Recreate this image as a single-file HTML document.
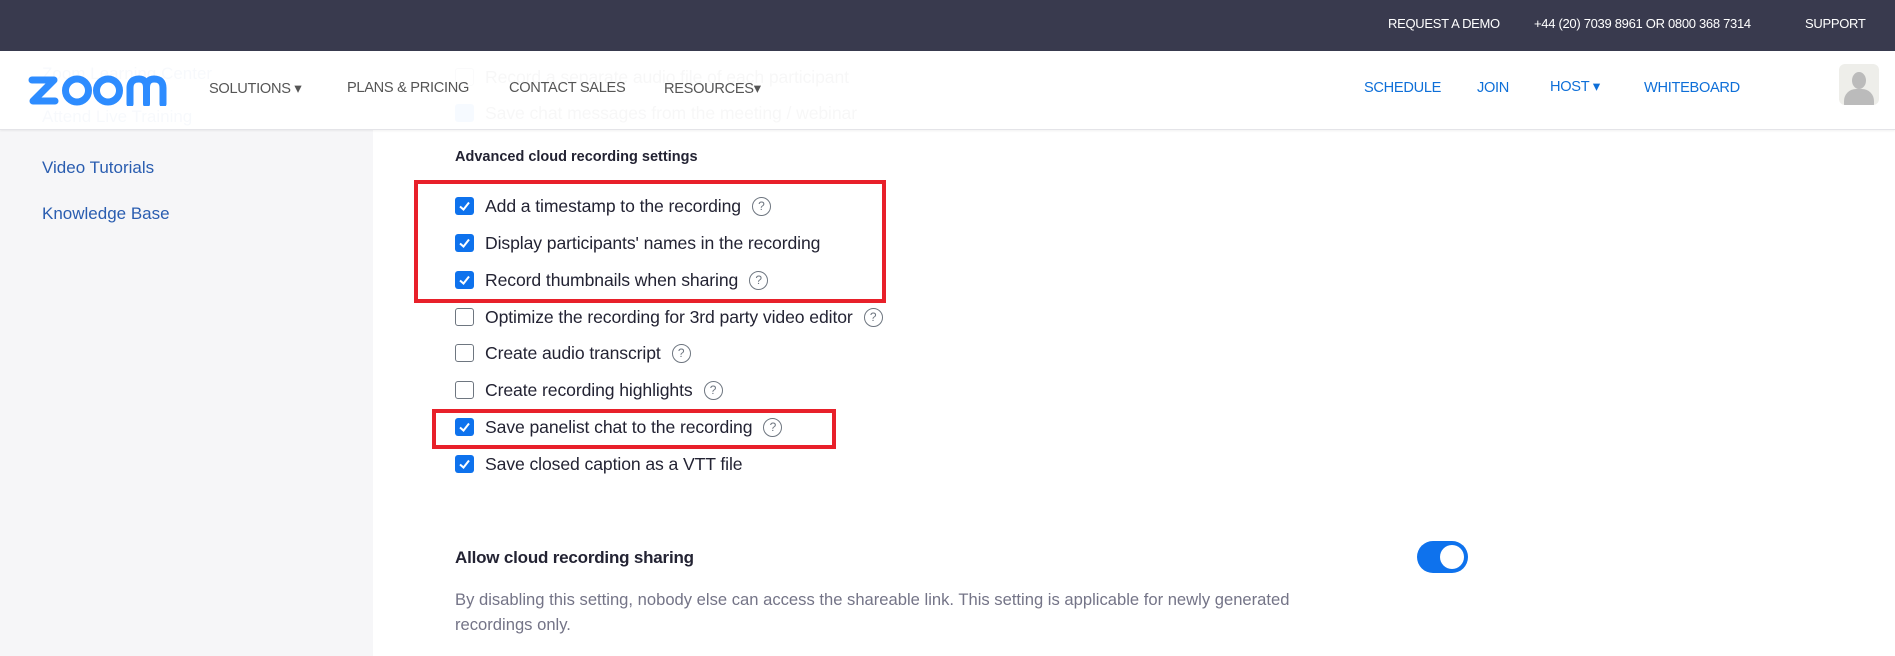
<!DOCTYPE html>
<html><head><meta charset="utf-8"><style>
*{box-sizing:border-box;margin:0;padding:0}
body{width:1895px;height:656px;overflow:hidden;background:#fff;font-family:"Liberation Sans",sans-serif;position:relative}
.a{position:absolute;white-space:nowrap}
.top{left:0;top:0;width:1895px;height:51px;background:#393a4e}
.top span{position:absolute;top:16px;color:#fff;font-size:13px;letter-spacing:-0.3px}
.side{left:0;top:130px;width:373px;height:526px;background:#f6f6f8}
.nav{left:0;top:51px;width:1895px;height:79px;background:rgba(255,255,255,0.965);border-bottom:1px solid #e4e4e8;box-shadow:0 1px 2px rgba(0,0,0,0.06)}
.nl{position:absolute;top:29px;font-size:14.6px;color:#555;letter-spacing:-0.3px}
.nr{position:absolute;top:29px;font-size:14.6px;color:#0e6fd8;letter-spacing:-0.3px}
.row{position:absolute;left:455px;height:20px;display:flex;align-items:center;white-space:nowrap}
.cb{position:relative;flex:none;width:19px;height:18px;border-radius:3px;background:#0e72ed}
.cb svg{position:absolute;left:3px;top:3px}
.cu{flex:none;width:19px;height:18px;border-radius:3px;border:1.5px solid #6e7680;background:#fff}
.t{margin-left:11px;font-size:17.6px;color:#232333;letter-spacing:-0.1px}
.q{margin-left:11px;flex:none;width:19px;height:19px;border:1.3px solid #6e7680;border-radius:50%;font-size:12px;color:#6e7680;text-align:center;line-height:17px}
.red{position:absolute;border:4px solid #e8202a}
</style></head><body>
<div class="a top">
<span style="left:1388px">REQUEST A DEMO</span>
<span style="left:1534px">+44 (20) 7039 8961 OR 0800 368 7314</span>
<span style="left:1805px">SUPPORT</span>
</div>
<div class="a side"></div>
<div class="a" style="left:42px;top:64px;font-size:17px;color:#2a5db0">Zoom Learning Center</div>
<div class="a" style="left:42px;top:107px;font-size:17px;color:#2a5db0">Attend Live Training</div>
<div class="row" style="top:67px"><div class="cu"></div><div class="t">Record a separate audio file of each participant</div></div>
<div class="row" style="top:103px"><div class="cb"></div><div class="t">Save chat messages from the meeting / webinar</div></div>
<div class="a nav">
<svg style="position:absolute;left:28px;top:23px" width="139" height="32" viewBox="0 0 139 32"><g fill="none" stroke="#2D8CFF" stroke-width="7" stroke-linejoin="round" stroke-linecap="round"><path d="M4 6H26L5 27H27"/><circle cx="49" cy="16.5" r="11.5"/><circle cx="80" cy="16.5" r="11.5"/><path d="M102 30V14Q102 5 111 5Q118.5 5 118.5 14V30M118.5 14Q118.5 5 126 5Q135 5 135 14V30"/></g></svg>
<span class="nl" style="left:209px">SOLUTIONS ▾</span>
<span class="nl" style="left:347px">PLANS &amp; PRICING</span>
<span class="nl" style="left:509px">CONTACT SALES</span>
<span class="nl" style="left:664px">RESOURCES▾</span>
<span class="nr" style="left:1364px">SCHEDULE</span>
<span class="nr" style="left:1477px">JOIN</span>
<span class="nr" style="left:1550px;top:27px">HOST ▾</span>
<span class="nr" style="left:1644px">WHITEBOARD</span>
<div style="position:absolute;left:1839px;top:13px;width:40px;height:41px;border-radius:6px;background:#eeeeea;overflow:hidden">
<div style="position:absolute;left:13px;top:8px;width:14px;height:17px;border-radius:50%;background:#bbb"></div>
<div style="position:absolute;left:5px;top:25px;width:30px;height:22px;border-radius:12px 12px 0 0;background:#bbb"></div></div>
</div>
<div class="a" style="left:42px;top:158px;font-size:17px;color:#2a5db0">Video Tutorials</div>
<div class="a" style="left:42px;top:204px;font-size:17px;color:#2a5db0">Knowledge Base</div>
<div class="a" style="left:455px;top:149px;font-size:14.5px;font-weight:bold;color:#232333">Advanced cloud recording settings</div>

<div class="row" style="top:196px"><div class="cb"><svg width="13" height="12"><path d="M2 6.5L5.5 9.5L11 2.5" stroke="#fff" stroke-width="2" fill="none"/></svg></div><div class="t">Add a timestamp to the recording</div><div class="q">?</div></div>
<div class="row" style="top:233px"><div class="cb"><svg width="13" height="12"><path d="M2 6.5L5.5 9.5L11 2.5" stroke="#fff" stroke-width="2" fill="none"/></svg></div><div class="t">Display participants' names in the recording</div></div>
<div class="row" style="top:270px"><div class="cb"><svg width="13" height="12"><path d="M2 6.5L5.5 9.5L11 2.5" stroke="#fff" stroke-width="2" fill="none"/></svg></div><div class="t">Record thumbnails when sharing</div><div class="q">?</div></div>
<div class="row" style="top:307px"><div class="cu"></div><div class="t">Optimize the recording for 3rd party video editor</div><div class="q">?</div></div>
<div class="row" style="top:343px"><div class="cu"></div><div class="t">Create audio transcript</div><div class="q">?</div></div>
<div class="row" style="top:380px"><div class="cu"></div><div class="t">Create recording highlights</div><div class="q">?</div></div>
<div class="row" style="top:417px"><div class="cb"><svg width="13" height="12"><path d="M2 6.5L5.5 9.5L11 2.5" stroke="#fff" stroke-width="2" fill="none"/></svg></div><div class="t">Save panelist chat to the recording</div><div class="q">?</div></div>
<div class="row" style="top:454px"><div class="cb"><svg width="13" height="12"><path d="M2 6.5L5.5 9.5L11 2.5" stroke="#fff" stroke-width="2" fill="none"/></svg></div><div class="t">Save closed caption as a VTT file</div></div>

<div class="red" style="left:414px;top:180px;width:472px;height:123px"></div>
<div class="red" style="left:432px;top:409px;width:404px;height:40px"></div>

<div class="a" style="left:455px;top:548px;font-size:17px;font-weight:bold;color:#232333;letter-spacing:-0.2px">Allow cloud recording sharing</div>
<div class="a" style="left:1417px;top:541px;width:51px;height:32px;border-radius:16px;background:#0e72ed"><div style="position:absolute;right:4px;top:4px;width:24px;height:24px;border-radius:50%;background:#fff"></div></div>
<div class="a" style="left:455px;top:587px;font-size:16.6px;color:#747487;line-height:25px;white-space:normal;width:880px">By disabling this setting, nobody else can access the shareable link. This setting is applicable for newly generated recordings only.</div>
</body></html>
